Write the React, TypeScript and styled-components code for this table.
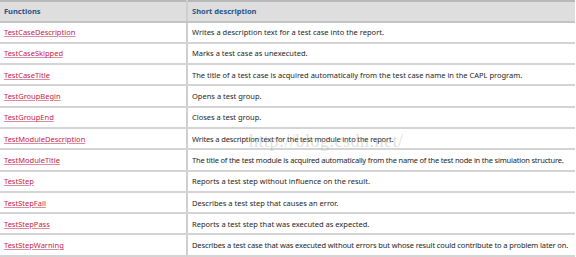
import React from "react";
import styled, { createGlobalStyle } from "styled-components";

const GlobalStyle = createGlobalStyle`
  html, body {
    margin: 0;
    padding: 0;
    background: #ffffff;
  }
`;

const Wrap = styled.div({
  position: "relative",
  width: "576px",
  height: "257px",
  overflow: "hidden",
  background: "#ffffff",
});

const Table = styled.table({
  width: "575px",
  tableLayout: "fixed",
  borderCollapse: "collapse",
  fontFamily: '"Noto Sans", "DejaVu Sans", sans-serif',
  fontSize: "7.5px",
  color: "#1e1e1e",
  borderTop: "2px solid #b8b8b8",
});

const HeadCell = styled.th<{ $first?: boolean }>((p) => ({
  background: "#dedede",
  color: "#2b5287",
  fontWeight: "bold",
  textAlign: "left",
  height: "18.5px",
  padding: "0 0 0 4px",
  borderBottom: "2px solid #c4c4c4",
  borderRight: p.$first ? "2px solid #cfcfcf" : "none",
  width: p.$first ? "182px" : "auto",
}));

const Cell = styled.td<{ $first?: boolean; $tracking?: number }>((p) => ({
  height: "19.3px",
  padding: "0 0 0 4px",
  borderBottom: "2px solid #d4d4d4",
  borderRight: p.$first ? "2px solid #cfcfcf" : "none",
  whiteSpace: "nowrap",
  overflow: "hidden",
  letterSpacing: p.$tracking ? `${p.$tracking}px` : "normal",
}));

const FnLink = styled.a({
  color: "#c8204a",
  textDecoration: "underline",
  textDecorationColor: "#e28aa0",
});

const Watermark = styled.div({
  position: "absolute",
  left: "249px",
  top: "131px",
  fontFamily: '"Liberation Serif", serif',
  fontSize: "18px",
  letterSpacing: "0.5px",
  color: "rgba(160,160,160,0.35)",
  pointerEvents: "none",
});

type Row = { fn: string; desc: string; tracking?: number };

const rows: Row[] = [
  { fn: "TestCaseDescription", desc: "Writes a description text for a test case into the report." },
  { fn: "TestCaseSkipped", desc: "Marks a test case as unexecuted." },
  { fn: "TestCaseTitle", desc: "The title of a test case is acquired automatically from the test case name in the CAPL program." },
  { fn: "TestGroupBegin", desc: "Opens a test group." },
  { fn: "TestGroupEnd", desc: "Closes a test group." },
  { fn: "TestModuleDescription", desc: "Writes a description text for the test module into the report.", tracking: -0.15 },
  {
    fn: "TestModuleTitle",
    desc: "The title of the test module is acquired automatically from the name of the test node in the simulation structure.",
    tracking: -0.2,
  },
  { fn: "TestStep", desc: "Reports a test step without influence on the result." },
  { fn: "TestStepFail", desc: "Describes a test step that causes an error." },
  { fn: "TestStepPass", desc: "Reports a test step that was executed as expected." },
  {
    fn: "TestStepWarning",
    desc: "Describes a test case that was executed without errors but whose result could contribute to a problem later on.",
    tracking: -0.13,
  },
];

export default function App() {
  return (
    <>
      <GlobalStyle />
      <Wrap>
        <Table>
          <thead>
            <tr>
              <HeadCell $first>Functions</HeadCell>
              <HeadCell>Short description</HeadCell>
            </tr>
          </thead>
          <tbody>
            {rows.map((r) => (
              <tr key={r.fn}>
                <Cell $first>
                  <FnLink href="#">{r.fn}</FnLink>
                </Cell>
                <Cell $tracking={r.tracking}>{r.desc}</Cell>
              </tr>
            ))}
          </tbody>
        </Table>
        <Watermark>http://blog.csdn.net/</Watermark>
      </Wrap>
    </>
  );
}
